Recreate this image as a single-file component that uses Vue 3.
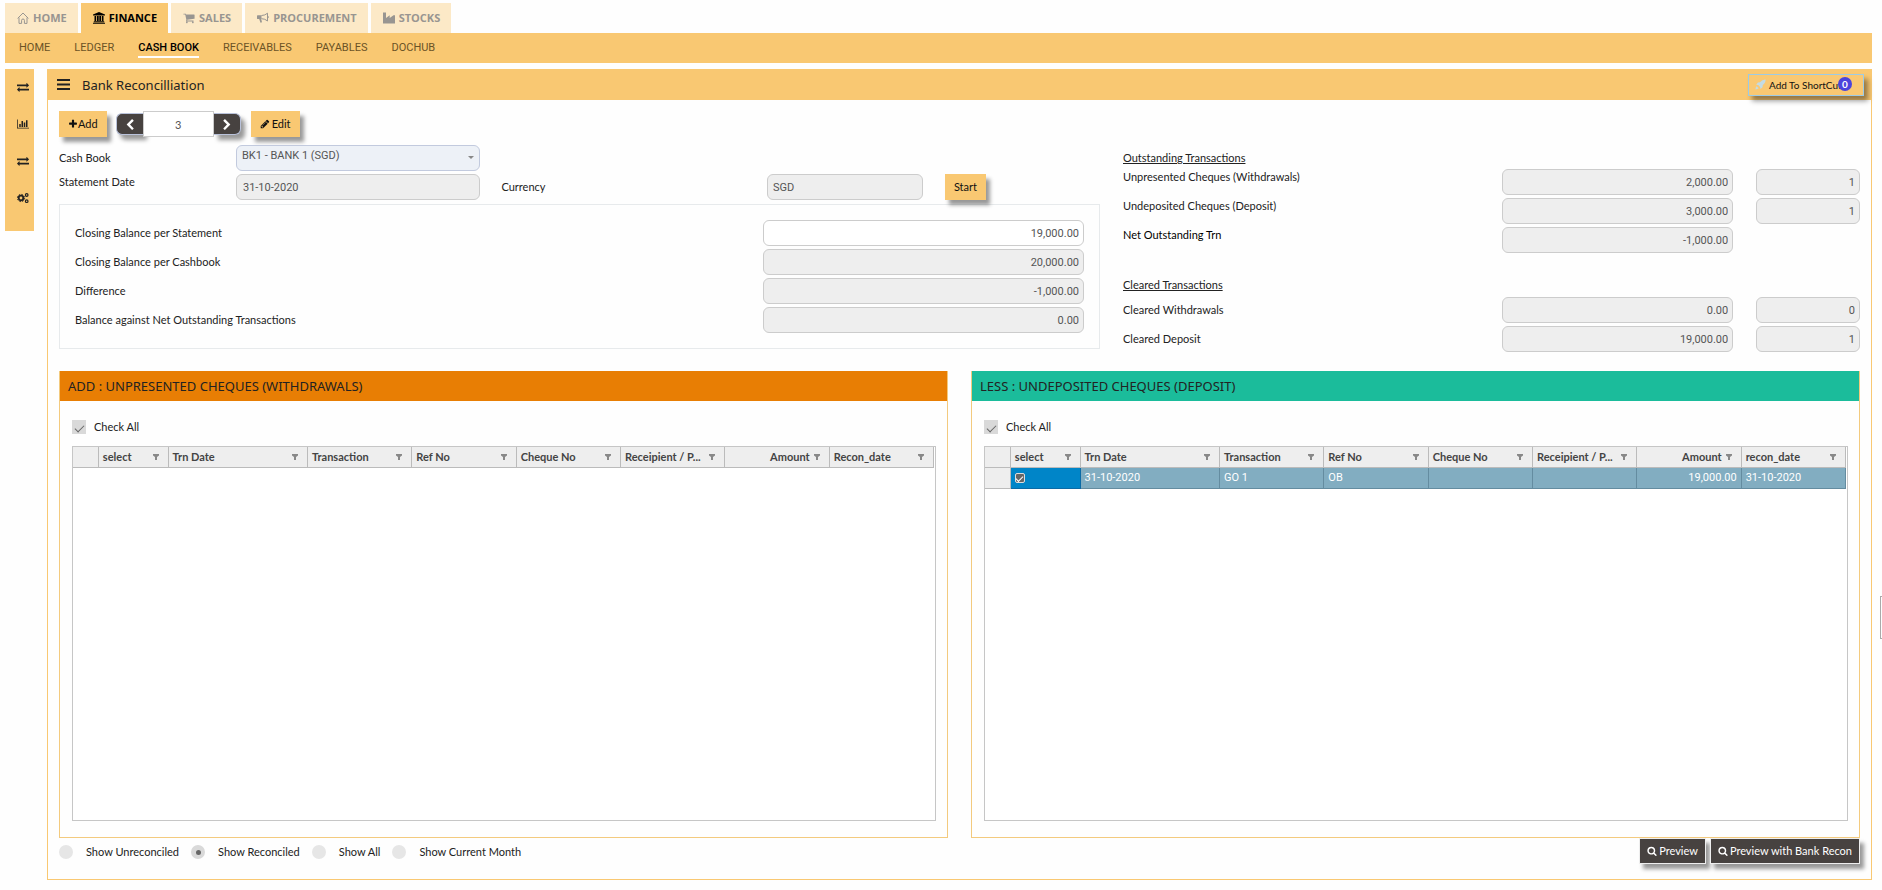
<script setup>
import { ref } from 'vue'

const exchange =
  'M1792 1184v192q0 13-9.5 22.5t-22.5 9.5h-1376v192q0 13-9.5 22.5t-22.5 9.5q-12 0-24-10l-319-320q-9-9-9-22 0-14 9-23l320-320q9-9 23-9 13 0 22.5 9.5t9.5 22.5v192h1376q13 0 22.5 9.5t9.5 22.5zm0-544q0 14-9 23l-320 320q-9 9-23 9-13 0-22.5-9.5t-9.5-22.5v-192h-1376q-13 0-22.5-9.5t-9.5-22.5v-192q0-13 9.5-22.5t22.5-9.5h1376v-192q0-14 9-23t23-9q12 0 24 10l319 319q9 9 9 23z'
const search =
  'M1216 832q0-185-131.5-316.5t-316.5-131.5-316.5 131.5-131.5 316.5 131.5 316.5 316.5 131.5 316.5-131.5 131.5-316.5zm512 832q0 52-38 90t-90 38q-54 0-90-38l-343-342q-179 124-399 124-143 0-273.5-55.5t-225-150-150-225-55.5-273.5 55.5-273.5 150-225 225-150 273.5-55.5 273.5 55.5 225 150 150 225 55.5 273.5q0 220-124 399l343 343q37 37 37 90z'
const plus =
  'M1600 736v192q0 40-28 68t-68 28h-416v416q0 40-28 68t-68 28h-192q-40 0-68-28t-28-68v-416h-416q-40 0-68-28t-28-68v-192q0-40 28-68t68-28h416v-416q0-40 28-68t68-28h192q40 0 68 28t28 68v416h416q40 0 68 28t28 68z'
const pencil =
  'M491 1536l91-91-235-235-91 91v107h128v128h107zm523-928q0-22-22-22-10 0-17 7l-542 542q-7 7-7 17 0 22 22 22 10 0 17-7l542-542q7-7 7-17zm-54-192l416 416-832 832h-416v-416zm683 96q0 53-37 90l-166 166-416-416 166-165q36-38 90-38 53 0 91 38l235 234q37 39 37 91z'
const chevronLeft =
  'M1427 301l-531 531 531 531q19 19 19 45t-19 45l-166 166q-19 19-45 19t-45-19l-742-742q-19-19-19-45t19-45l742-742q19-19 45-19t45 19l166 166q19 19 19 45t-19 45z'
const cart =
  'M704 1536q0 52-38 90t-90 38-90-38-38-90 38-90 90-38 90 38 38 90zm896 0q0 52-38 90t-90 38-90-38-38-90 38-90 90-38 90 38 38 90zm128-1088v512q0 24-16.5 42.5t-40.5 21.5l-1044 122q13 60 13 70 0 16-24 64h920q26 0 45 19t19 45-19 45-45 19h-1024q-26 0-45-19t-19-45q0-11 8-31.5t16-36 21.5-40 15.5-29.5l-177-823h-204q-26 0-45-19t-19-45 19-45 45-19h256q16 0 28.5 6.5t19.5 15.5 13 24.5 8 26 5.5 29.5 4.5 26h1201q26 0 45 19t19 45z'
const barChart =
  'M640 896v512h-256v-512h256zm384-512v1024h-256v-1024h256zm1024 1152v128h-2048v-1536h128v1408h1920zm-640-896v768h-256v-768h256zm384-384v1152h-256v-1152h256z'

const tabs = [
  { name: 'HOME', icon: 'home' },
  { name: 'FINANCE', icon: 'bank', active: true },
  { name: 'SALES', icon: 'cart' },
  { name: 'PROCUREMENT', icon: 'horn' },
  { name: 'STOCKS', icon: 'industry' },
]
const menu = ['HOME', 'LEDGER', 'CASH BOOK', 'RECEIVABLES', 'PAYABLES', 'DOCHUB']

const balances = [
  { id: 'statement', label: 'Closing Balance per Statement', value: '19,000.00', editable: true },
  { id: 'cashbook', label: 'Closing Balance per Cashbook', value: '20,000.00' },
  { id: 'difference', label: 'Difference', value: '-1,000.00' },
  { id: 'against', label: 'Balance against Net Outstanding Transactions', value: '0.00' },
]
const outstanding = [
  { id: 'unpresented', label: 'Unpresented Cheques (Withdrawals)', value: '2,000.00', count: '1' },
  { id: 'undeposited', label: 'Undeposited Cheques (Deposit)', value: '3,000.00', count: '1' },
  { id: 'net', label: 'Net Outstanding Trn', value: '-1,000.00', strong: true },
]
const cleared = [
  { id: 'cleared-w', label: 'Cleared Withdrawals', value: '0.00', count: '0' },
  { id: 'cleared-d', label: 'Cleared Deposit', value: '19,000.00', count: '1' },
]

const columns = ['select', 'Trn Date', 'Transaction', 'Ref No', 'Cheque No', 'Receipient / P...', 'Amount']
const grids = [
  {
    id: 'add',
    title: 'ADD : UNPRESENTED CHEQUES (WITHDRAWALS)',
    columns: [...columns, 'Recon_date'],
    rows: [],
  },
  {
    id: 'less',
    title: 'LESS : UNDEPOSITED CHEQUES (DEPOSIT)',
    columns: [...columns, 'recon_date'],
    rows: [['31-10-2020', 'GO 1', 'OB', '', '', '19,000.00', '31-10-2020']],
  },
]

const filters = ['Show Unreconciled', 'Show Reconciled', 'Show All', 'Show Current Month']
const filter = ref('Show Reconciled')
</script>

<template>
  <div class="page">
    <nav class="tabs">
      <a v-for="t in tabs" :key="t.name" href="#" class="tab" :class="{ active: t.active }">
        <svg v-if="t.icon === 'home'" class="ico line" viewBox="0 0 12 12">
          <path d="M.6 6.400 6 1l5.400 5.400M2 5.600V11.400H4.600V8.300Q4.600 7 6 7T7.400 8.300V11.400H10V5.600" />
        </svg>
        <svg v-else-if="t.icon === 'bank'" class="ico" viewBox="0 0 12 12">
          <path d="M6 0 12 2.600V3.500H0V2.600zM1.500 4H3.200V9H1.500zM4 4H5.700V9H4zM6.300 4H8V9H6.300zM8.800 4h1.700V9H8.800zM.8 9.300H11.200V10.200H.8zM0 10.700H12V11.700H0z" />
        </svg>
        <svg v-else-if="t.icon === 'cart'" class="ico" viewBox="0 0 1792 1792"><path :d="cart" /></svg>
        <svg v-else-if="t.icon === 'horn'" class="ico" viewBox="0 0 12 12">
          <path d="M0 3.800Q0 3.200.7 3.200H4.500V7H4.200L5 10.300 3.500 10.800 2.200 7H.7Q0 7 0 6.400z" />
          <path fill="none" stroke="currentColor" d="M4.500 3.500Q8 3.500 10.500 1.200V9Q8 6.700 4.500 6.700M10.500 4.300Q11.500 4.300 11.500 5.100T10.500 5.900" />
        </svg>
        <svg v-else class="ico" viewBox="0 0 12 12">
          <path d="M0 .5H3V6L6.700 3.300V6L10.500 3.300H12V11.500H0z" />
        </svg>
        <span>{{ t.name }}</span>
      </a>
    </nav>

    <nav class="menu">
      <a v-for="m in menu" :key="m" href="#" :class="{ active: m === 'CASH BOOK' }">{{ m }}</a>
    </nav>

    <div class="body">
      <aside class="side">
        <a href="#" aria-label="Transfers"><svg viewBox="0 0 1792 1792"><path :d="exchange" /></svg></a>
        <a href="#" aria-label="Reports"><svg viewBox="0 0 2048 1792"><path :d="barChart" /></svg></a>
        <a href="#" aria-label="Exchange"><svg viewBox="0 0 1792 1792"><path :d="exchange" /></svg></a>
        <a href="#" aria-label="Settings">
          <svg class="line" viewBox="0 0 12 12">
            <circle cx="4" cy="6" r="2.300" stroke-width="1.800" />
            <circle cx="4" cy="6" r="3.600" stroke-width="1" stroke-dasharray="1.500 1.330" />
            <circle cx="9.700" cy="3" r="1.300" stroke-width="1.200" />
            <circle cx="9.700" cy="9.200" r="1.300" stroke-width="1.200" />
          </svg>
        </a>
      </aside>

      <main class="panel">
        <header class="panel-head">
          <button class="burger" aria-label="Menu">
            <svg viewBox="0 0 13 11"><path d="M0 0H13V2H0zM0 4.500H13V6.500H0zM0 9H13V11H0z" /></svg>
          </button>
          <h1>Bank Reconcilliation</h1>
          <button class="shortcut">
            <svg viewBox="0 0 12 12">
              <path d="M11.500.5Q8 .3 5.500 3.500L3.200 3.800 1.300 6.300 3.500 6.500 5.600 8.600 5.800 10.800 8.200 8.900 8.500 6.500Q11.800 4 11.500.5zM1.800 8Q.6 9 .5 11.500 3 11.300 4 10.200z" />
            </svg>
            <span>Add To ShortCut</span>
            <b class="badge">0</b>
          </button>
        </header>

        <div class="content">
          <div class="toolbar">
            <button class="btn"><svg viewBox="0 0 1792 1792"><path :d="plus" /></svg>Add</button>
            <div class="pager">
              <button class="prev" aria-label="Previous"><svg viewBox="0 0 1792 1792"><path :d="chevronLeft" /></svg></button>
              <input value="3" aria-label="Record number" />
              <button class="next" aria-label="Next"><svg viewBox="0 0 1792 1792"><path :d="chevronLeft" /></svg></button>
            </div>
            <button class="btn edit"><svg viewBox="0 0 1792 1792"><path :d="pencil" /></svg>Edit</button>
          </div>

          <div class="summary">
            <section class="details">
              <div class="form-row">
                <label for="book">Cash Book</label>
                <div class="select">
                  <select id="book"><option>BK1 - BANK 1 (SGD)</option></select>
                </div>
              </div>
              <div class="form-row">
                <label for="date" class="raised">Statement Date</label>
                <input id="date" class="field" value="31-10-2020" readonly />
                <label for="currency" class="currency">Currency</label>
                <input id="currency" class="field narrow" value="SGD" readonly />
                <div class="start"><button class="btn">Start</button></div>
              </div>
              <div class="balances">
                <div v-for="b in balances" :key="b.id" class="balance">
                  <label :for="b.id">{{ b.label }}</label>
                  <input :id="b.id" class="field num" :class="{ editable: b.editable }" :value="b.value" :readonly="!b.editable" />
                </div>
              </div>
            </section>

            <section class="totals">
              <h2>Outstanding Transactions</h2>
              <div class="rows high">
                <div v-for="o in outstanding" :key="o.id" class="total">
                  <label :for="o.id" :class="{ strong: o.strong }">{{ o.label }}</label>
                  <input :id="o.id" class="field num" :value="o.value" readonly />
                  <input v-if="o.count" class="field num count" :value="o.count" :aria-label="o.label + ' count'" readonly />
                </div>
              </div>
              <h2 class="second">Cleared Transactions</h2>
              <div class="rows">
                <div v-for="o in cleared" :key="o.id" class="total">
                  <label :for="o.id">{{ o.label }}</label>
                  <input :id="o.id" class="field num" :value="o.value" readonly />
                  <input class="field num count" :value="o.count" :aria-label="o.label + ' count'" readonly />
                </div>
              </div>
            </section>
          </div>

          <div class="lists">
            <section v-for="g in grids" :key="g.id" class="list" :class="g.id">
              <h3>{{ g.title }}</h3>
              <div class="list-body">
                <label class="check-all">
                  <input type="checkbox" checked />
                  <span>Check All</span>
                </label>
                <div class="grid">
                  <table>
                    <colgroup>
                      <col class="c-mark" /><col class="c-select" /><col class="c-date" />
                      <col span="6" />
                    </colgroup>
                    <thead>
                      <tr>
                        <th></th>
                        <th v-for="c in g.columns" :key="c">
                          <div class="th" :class="{ right: c === 'Amount' }">
                            <span>{{ c }}</span>
                            <svg viewBox="0 0 6 6"><path d="M0 0H6V1.500L4 3V6H2V3L0 1.500z" /></svg>
                          </div>
                        </th>
                      </tr>
                    </thead>
                    <tbody>
                      <tr v-for="(r, i) in g.rows" :key="i">
                        <td class="mark"></td>
                        <td class="picked"><input type="checkbox" checked aria-label="Select row" /></td>
                        <td v-for="(v, j) in r" :key="j" :class="{ amount: j === 5 }">{{ v }}</td>
                      </tr>
                    </tbody>
                  </table>
                </div>
              </div>
            </section>
          </div>

          <footer class="foot">
            <div class="radios">
              <label v-for="f in filters" :key="f">
                <input v-model="filter" type="radio" name="filter" :value="f" />
                <span>{{ f }}</span>
              </label>
            </div>
            <div class="actions">
              <button><svg viewBox="0 0 1792 1792"><path :d="search" /></svg>Preview</button>
              <button><svg viewBox="0 0 1792 1792"><path :d="search" /></svg>Preview with Bank Recon</button>
            </div>
          </footer>
        </div>
      </main>
    </div>
    <div class="drawer"></div>
  </div>
</template>

<style>
body {
  background: #fefefe;
}
</style>

<style scoped>
* {
  box-sizing: border-box;
}
.page {
  position: relative;
  display: flex;
  flex-direction: column;
  min-height: 100vh;
  padding: 3px 10px 10px 5px;
  font: 11px/16px Lato, 'Noto Sans', sans-serif;
  color: #222;
}
.drawer {
  position: absolute;
  top: 67%;
  right: 0;
  width: 2px;
  height: 43px;
  border: solid #aaa;
  border-width: 1px 0 1px 1px;
}
button,
input,
select {
  margin: 0;
  font: inherit;
  color: inherit;
}
a {
  color: inherit;
  text-decoration: none;
}
svg {
  display: block;
  fill: currentColor;
}
svg.line {
  fill: none;
  stroke: currentColor;
}
h1,
h2,
h3 {
  margin: 0;
  font-weight: 400;
}
.tabs {
  display: flex;
  gap: 3px;
}
.tab {
  display: flex;
  align-items: center;
  gap: 4px;
  height: 30px;
  padding: 0 11px 0 12px;
  background: #fce9c7;
  color: #989591;
  font: 700 11px/16px 'Open Sans', sans-serif;
}
.tab.active {
  background: #f9c872;
  color: #000;
}
.ico {
  width: 12px;
  height: 12px;
}
.menu {
  display: flex;
  align-items: center;
  gap: 24px;
  height: 30px;
  padding-left: 14px;
  background: #f9c872;
  color: #6b5326;
  font-family: Roboto, sans-serif;
}
.menu .active {
  color: #000;
  font-weight: 500;
  box-shadow: 0 2px #fff;
}
.body {
  display: flex;
  flex: 1;
  align-items: stretch;
  gap: 13px;
  margin-top: 6px;
}
.side {
  display: flex;
  flex-direction: column;
  align-self: flex-start;
  align-items: center;
  width: 29px;
  gap: 25px;
  padding: 12px 0 27px 6px;
  background: #f9c872;
}
.side svg {
  width: 12px;
  height: 12px;
}
.panel {
  display: flex;
  flex: 1;
  flex-direction: column;
  min-width: 0;
  border: 1px solid #f9c872;
  border-top: 0;
}
.panel-head {
  display: flex;
  align-items: center;
  height: 31px;
  padding: 0 7px 0 9px;
  background: #f9c872;
}
.burger {
  padding: 0;
  border: 0;
  background: none;
}
.burger svg {
  width: 13px;
  height: 11px;
}
.panel-head h1 {
  margin-left: 12px;
  font: 13px/16px 'Noto Sans', sans-serif;
}
.shortcut {
  position: relative;
  display: flex;
  align-items: center;
  gap: 3px;
  width: 116px;
  height: 22px;
  margin-left: auto;
  padding: 0 6px;
  border: 1px solid #9ccbe6;
  background: #f9c872;
  box-shadow: 4px 5px 5px rgba(0, 0, 0, 0.4);
  color: #111;
  font-size: 10px;
  white-space: nowrap;
}
.shortcut svg {
  flex: none;
  width: 11px;
  height: 11px;
  color: #c3dbe4;
}
.badge {
  position: absolute;
  top: 2px;
  right: 11px;
  width: 14px;
  height: 14px;
  border-radius: 7px;
  background: #4b44dc;
  color: #fff;
  font-size: 10px;
  line-height: 14px;
  text-align: center;
}
.content {
  display: flex;
  flex: 1;
  flex-direction: column;
  padding: 11px 11px 0;
}
.toolbar {
  display: flex;
}
.btn {
  display: flex;
  align-items: center;
  height: 26px;
  padding: 0 9px;
  border: 0;
  background: #f9c872;
  box-shadow: 4px 5px 4px rgba(0, 0, 0, 0.4);
  color: #111;
}
.btn svg {
  width: 10px;
  height: 10px;
}
.btn.edit svg {
  margin-right: 2px;
}
.pager {
  display: flex;
  align-items: center;
  margin: 0 10px 0 9px;
}
.pager button {
  display: flex;
  align-items: center;
  justify-content: center;
  width: 27px;
  height: 22px;
  padding: 2px 0 0;
  border: 1px solid #b9c2da;
  background: #474240;
  box-shadow: 4px 5px 4px rgba(0, 0, 0, 0.4);
  color: #fff;
}
.pager svg {
  width: 12px;
  height: 12px;
}
.pager .prev {
  border-right: 0;
  border-radius: 6px 0 0 6px;
}
.pager .next {
  border-left: 0;
  border-radius: 0 6px 6px 0;
}
.pager .next svg {
  transform: scaleX(-1);
}
.pager input {
  position: relative;
  width: 71px;
  height: 26px;
  padding: 0;
  border: 1px solid #ccc;
  background: #fff;
  color: #555;
  text-align: center;
}
.summary {
  display: grid;
  grid-template-columns: minmax(0, 1041fr) minmax(0, 737fr);
  gap: 23px;
  margin-top: 8px;
}
.form-row {
  display: grid;
  grid-template-columns: 17% 23.400% 2.100% 25.500% 15% 2.100% 1fr;
  align-items: center;
  margin-bottom: 3px;
}
.raised {
  align-self: start;
}
.currency {
  grid-column: 4;
}
.start {
  display: flex;
  grid-column: 7;
}
.field {
  width: 100%;
  height: 26px;
  padding: 0 6px;
  border: 1px solid #ccc;
  border-radius: 6px;
  background: #eee;
  color: #555;
  font-family: Roboto, sans-serif;
}
.narrow {
  padding: 0 5px;
}
.num {
  padding: 0 4px;
  text-align: right;
}
.editable {
  background: #fff;
}
.select {
  position: relative;
}
.select select {
  display: block;
  width: 100%;
  height: 26px;
  padding: 0 5px 4px;
  border: 1px solid #c2cade;
  border-radius: 6px;
  background: #edf1f7;
  color: #555;
  font-family: Roboto, sans-serif;
  appearance: none;
}
.select::after {
  content: '';
  position: absolute;
  top: 11px;
  right: 6px;
  border: 3px solid transparent;
  border-top-color: #888;
  pointer-events: none;
}
.balances {
  display: grid;
  gap: 3px;
  margin-top: 4px;
  padding: 15px;
  border: 1px solid #e7eaec;
}
.balance {
  display: grid;
  grid-template-columns: 1fr 31.800%;
  align-items: center;
}
.totals {
  padding-top: 5px;
}
.totals h2 {
  margin-bottom: 3px;
  font-size: 11px;
  line-height: 16px;
  text-decoration: underline;
}
.totals .second {
  margin: 24px 0 4px;
}
.rows {
  display: grid;
  gap: 3px;
}
.total {
  display: grid;
  grid-template-columns: 51.400% 31.400% 3.100% 14.100%;
  align-items: center;
}
.count {
  grid-column: 4;
}
.high label {
  align-self: start;
}
.strong {
  color: #000;
}
.lists {
  display: grid;
  flex: 1;
  grid-template-columns: minmax(0, 1fr) minmax(0, 1fr);
  gap: 23px;
  margin-top: 19px;
}
.list {
  display: flex;
  flex-direction: column;
  min-height: 300px;
  border: 1px solid #f3ca7e;
  border-top: 0;
}
.list h3 {
  padding: 0 8px;
  background: #e87e04;
  color: #222;
  font: 13px/30px 'Noto Sans', sans-serif;
}
.list.less h3 {
  background: #1bbc9b;
}
.list-body {
  display: flex;
  flex: 1;
  flex-direction: column;
  padding: 18px 11px 16px 12px;
}
.check-all {
  display: flex;
  align-items: center;
  align-self: flex-start;
  gap: 8px;
}
.check-all input {
  display: grid;
  place-items: center;
  width: 14px;
  height: 14px;
  background: #d9d9d9;
  appearance: none;
}
.check-all input:checked::before {
  content: '';
  width: 8px;
  height: 4px;
  border: solid #666;
  border-width: 0 0 1px 1px;
  transform: rotate(-45deg);
}
.grid {
  flex: 1;
  margin-top: 11px;
  padding-right: 1px;
  border: 1px solid #c6c6c6;
  background: #fff;
}
table {
  width: 100%;
  border-collapse: separate;
  border-spacing: 0;
  table-layout: fixed;
}
.c-mark {
  width: 3%;
}
.c-select {
  width: 8.100%;
}
.c-date {
  width: 16.200%;
}
th,
td {
  height: 21px;
  padding: 0 4px;
  overflow: hidden;
  border: solid #bbb;
  border-width: 0 1px 1px 0;
  line-height: 16px;
  text-align: left;
  white-space: nowrap;
}
th {
  background: #eee;
  color: #444;
  font-weight: 700;
}
.th {
  display: flex;
  align-items: center;
  justify-content: space-between;
  padding-right: 5px;
}
.th.right {
  justify-content: flex-end;
  gap: 4px;
}
.th svg {
  flex: none;
  width: 6px;
  height: 6px;
  color: #888;
}
td {
  border-color: #648ca0;
  background: #82adc1;
  color: #fff;
  font-family: Roboto, sans-serif;
}
td.mark {
  border-color: #bbb;
  background: #eee;
}
td.picked {
  border-color: #0a6aa6;
  background: #0085c8;
}
.picked input {
  display: grid;
  place-items: center;
  width: 10px;
  height: 10px;
  border: 1px solid #ddd;
  border-radius: 2px;
  background: #666;
  appearance: none;
}
.picked input:checked::before {
  content: '';
  width: 6px;
  height: 3px;
  border: solid #fff;
  border-width: 0 0 1px 1px;
  transform: rotate(-45deg);
}
.amount {
  text-align: right;
}
.foot {
  display: flex;
  justify-content: space-between;
  height: 41px;
}
.radios {
  display: flex;
  align-items: center;
  gap: 12px;
  height: 28px;
}
.radios label {
  display: flex;
  align-items: center;
  gap: 13px;
}
.radios input {
  display: grid;
  place-items: center;
  width: 14px;
  height: 14px;
  border-radius: 7px;
  background: #e6e6e6;
  appearance: none;
}
.radios input:checked {
  background: #d9d9d9;
}
.radios input:checked::before {
  content: '';
  width: 5px;
  height: 5px;
  border-radius: 3px;
  background: #666;
}
.actions {
  display: flex;
  gap: 4px;
}
.actions button {
  display: flex;
  align-items: center;
  gap: 2px;
  height: 26px;
  padding: 0 7px;
  border: 1px solid #eee;
  background: #474240;
  box-shadow: 4px 5px 4px rgba(0, 0, 0, 0.4);
  color: #fff;
}
.actions svg {
  width: 10px;
  height: 10px;
}
</style>
